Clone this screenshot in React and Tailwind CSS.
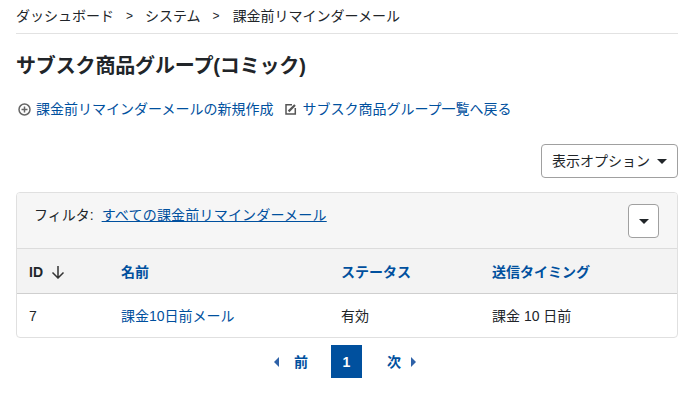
import React from "react";

const Caret = ({ className = "" }) => (
  <span
    className={
      "inline-block h-0 w-0 border-x-[5px] border-t-[5px] border-x-transparent border-t-[#212529] " +
      className
    }
  />
);

const PlusCircle = () => (
  <svg width="13" height="13" viewBox="0 0 13 13" fill="none" stroke="#666" strokeWidth="1.5">
    <circle cx="6.5" cy="6.5" r="5.5" />
    <path d="M6.5 3.5v6M3.5 6.5h6" />
  </svg>
);

const EditSquare = () => (
  <svg width="12" height="12" viewBox="0 0 12 12" fill="none" stroke="#555">
    <path d="M7 1.7H1v9.3h9.3V5" strokeWidth="1.5" />
    <path d="M3.6 8.4L10 2" strokeWidth="2.2" />
  </svg>
);

const columns = [
  { label: "名前", width: "w-[220px]" },
  { label: "ステータス", width: "w-[151px]" },
  { label: "送信タイミング", width: "" },
];

export default function App() {
  return (
    <div className="min-h-[418px] bg-white pl-4 pr-5 font-['Liberation_Sans','Noto_Sans_CJK_JP',sans-serif] text-sm text-[#212529]">
      <nav className="flex h-[34px] items-center border-b border-[#e2e2e2] pb-[2px]">
        <span>ダッシュボード</span>
        <span className="mx-[12px] text-xs">&gt;</span>
        <span>システム</span>
        <span className="ml-[12px] mr-[13px] text-xs">&gt;</span>
        <span>課金前リマインダーメール</span>
      </nav>

      <h1 className="mt-[18px] text-xl leading-[28px] font-bold tracking-[-0.15px]">サブスク商品グループ(コミック)</h1>

      <div className="mt-[19px] flex h-[20px] items-center text-[#00509e]">
        <span className="ml-[2px] mr-[5px] flex"><PlusCircle /></span>
        <a>課金前リマインダーメールの新規作成</a>
        <span className="ml-[12px] mr-[5px] flex"><EditSquare /></span>
        <a>サブスク商品グループ一覧へ戻る</a>
      </div>

      <div className="mt-[25px] flex justify-end">
        <button className="flex h-[34px] w-[137px] items-center justify-center gap-[7px] rounded border border-[#a0a0a0] bg-white">
          表示オプション
          <Caret />
        </button>
      </div>

      <div className="mt-[14px] overflow-hidden rounded border border-[#e0e0e0]">
        <div className="flex h-[56px] justify-between border-b border-[#dcdcdc] bg-[#f6f6f6] pl-[17px] pr-[18px]">
          <div className="pt-[12px] leading-[20px]">
            フィルタ:
            <a className="ml-[8px] tracking-[0.2px] text-[#00509e] underline">すべての課金前リマインダーメール</a>
          </div>
          <button className="mt-[11px] flex h-[34px] w-[31px] items-center justify-center rounded border border-[#a0a0a0] bg-white">
            <Caret />
          </button>
        </div>

        <div className="flex h-[45px] items-center border-b border-[#cfcfcf] bg-[#f3f3f3] pt-[1px] font-bold">
          <div className="flex w-[92px] items-center gap-[8px] pl-3">
            ID
            <svg width="14" height="14" viewBox="0 0 14 14" fill="none" stroke="#333" strokeWidth="1.5">
              <path d="M7 1v12M1.5 7.5L7 13l5.5-5.5" />
            </svg>
          </div>
          {columns.map((col) => (
            <div key={col.label} className={"pl-3 text-[#00509e] " + col.width}>
              {col.label}
            </div>
          ))}
        </div>

        <div className="flex h-[43px] items-center">
          <div className="w-[92px] pl-3">7</div>
          <a className="w-[220px] pl-3 text-[#00509e]">課金10日前メール</a>
          <div className="w-[151px] pl-3">有効</div>
          <div className="pl-3">課金 10 日前</div>
        </div>
      </div>

      <div className="mt-[7px] flex h-[33px] items-center justify-center pr-[4px] font-bold text-[#00509e]">
        <span className="h-0 w-0 border-y-[5px] border-r-[5px] border-y-transparent border-r-[#2f62a8]" />
        <span className="ml-[15px]">前</span>
        <span className="ml-[23px] flex h-[33px] w-[31px] items-center justify-center bg-[#00509e] text-white">1</span>
        <span className="ml-[25px]">次</span>
        <span className="ml-[10px] h-0 w-0 border-y-[5px] border-l-[5px] border-y-transparent border-l-[#2f62a8]" />
      </div>
    </div>
  );
}
